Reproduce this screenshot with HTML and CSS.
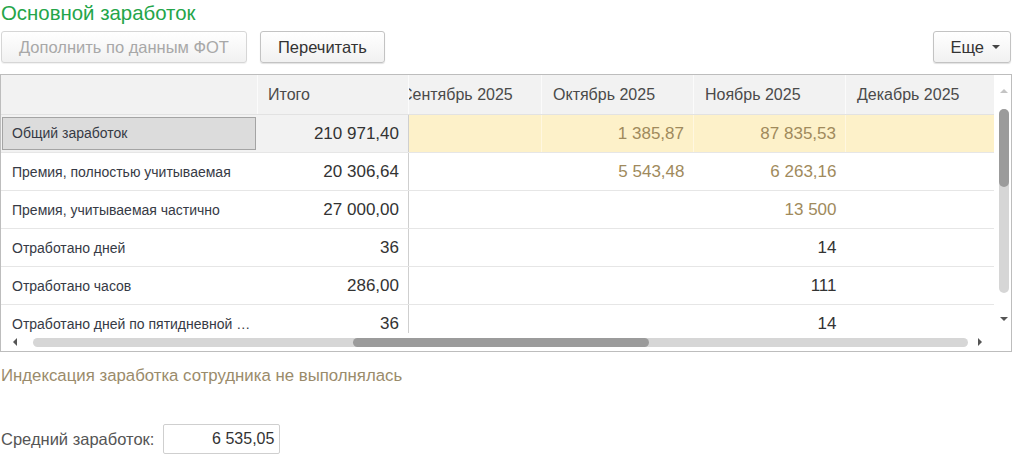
FILE: index.html
```html
<!DOCTYPE html>
<html lang="ru">
<head>
    <meta charset="UTF-8">
    <meta name="viewport" content="width=device-width, initial-scale=1.0">
    <title>Основной заработок</title>
    <link rel="stylesheet" href="styles.css">
</head>
<body>
  <div class="form">
    <div class="group_title">Основной заработок</div>

    <div class="toolbar">
      <button class="btn" disabled>Дополнить по данным ФОТ</button>
      <button class="btn">Перечитать</button>
      <button class="btn more">Еще <span class="caret"></span></button>
    </div>

    <div class="grid">
      <div class="grid_body">
        <table class="fixed">
          <tr class="head">
            <th class="name"></th>
            <th>Итого</th>
          </tr>
          <tr class="current">
            <td class="name"><div class="selected">Общий заработок</div></td>
            <td class="num">210 971,40</td>
          </tr>
          <tr>
            <td class="name">Премия, полностью учитываемая</td>
            <td class="num">20 306,64</td>
          </tr>
          <tr>
            <td class="name">Премия, учитываемая частично</td>
            <td class="num">27 000,00</td>
          </tr>
          <tr>
            <td class="name">Отработано дней</td>
            <td class="num">36</td>
          </tr>
          <tr>
            <td class="name">Отработано часов</td>
            <td class="num">286,00</td>
          </tr>
          <tr>
            <td class="name">Отработано дней по пятидневной …</td>
            <td class="num">36</td>
          </tr>
        </table>

        <div class="months_view">
          <table class="months">
            <tr class="head">
              <th>Сентябрь 2025</th>
              <th>Октябрь 2025</th>
              <th>Ноябрь 2025</th>
              <th>Декабрь 2025</th>
            </tr>
            <tr class="current">
              <td></td>
              <td class="num soft">1 385,87</td>
              <td class="num soft">87 835,53</td>
              <td></td>
            </tr>
            <tr>
              <td></td>
              <td class="num soft">5 543,48</td>
              <td class="num soft">6 263,16</td>
              <td></td>
            </tr>
            <tr>
              <td></td>
              <td></td>
              <td class="num soft">13 500</td>
              <td></td>
            </tr>
            <tr>
              <td></td>
              <td></td>
              <td class="num">14</td>
              <td></td>
            </tr>
            <tr>
              <td></td>
              <td></td>
              <td class="num">111</td>
              <td></td>
            </tr>
            <tr>
              <td></td>
              <td></td>
              <td class="num">14</td>
              <td></td>
            </tr>
          </table>
        </div>
      </div>

      <div class="vscroll">
        <span class="arrow up"></span>
        <div class="track"><div class="thumb"></div></div>
        <span class="arrow down"></span>
      </div>

      <div class="hscroll">
        <span class="arrow left"></span>
        <div class="track"><div class="thumb"></div></div>
        <span class="arrow right"></span>
      </div>

      <div class="corner"></div>
    </div>

    <div class="note">Индексация заработка сотрудника не выполнялась</div>

    <div class="average">
      <span class="label">Средний заработок:</span>
      <div class="field">6 535,05</div>
    </div>
  </div>
</body>
</html>
```

FILE: styles.css
```css
body{
  margin: 0;
  background: #fff;
  font-family: Arial, "Liberation Sans", sans-serif;
  color: #333;
}

.form{
  width: 1012px;
}

.group_title{
  height: 26px;
  line-height: 26px;
  padding-left: 1px;
  font-size: 20.4px;
  color: #24a549;
}

/* buttons */

.toolbar{
  display: flex;
  gap: 13px;
  margin-top: 5px;
  padding: 0 1px 0 1px;
}

.btn{
  height: 32px;
  padding: 0 17px;
  font-family: inherit;
  font-size: 16.5px;
  color: #333;
  background: linear-gradient(#ffffff, #f1f1f1);
  border: 1px solid #c3c3c3;
  border-radius: 3px;
  box-shadow: 0 1px 1px rgba(0,0,0,0.12);
}

.btn[disabled]{
  color: #a8a8a8;
  border-color: #d6d6d6;
  box-shadow: 0 1px 1px rgba(0,0,0,0.06);
}

.more{
  margin-left: auto;
  display: flex;
  align-items: center;
  gap: 8px;
  padding: 0 10px 0 16px;
}

.caret{
  width: 0;
  height: 0;
  border-left: 4px solid transparent;
  border-right: 4px solid transparent;
  border-top: 4px solid #444;
}

/* table */

.grid{
  display: grid;
  grid-template-columns: 993px 17px;
  grid-template-rows: 258px 18px;
  margin-top: 11px;
  border: 1px solid #bdbdbd;
}

.grid_body{
  display: flex;
  overflow: hidden;
}

table{
  border-collapse: collapse;
  table-layout: fixed;
}

th, td{
  height: 37px;
  padding: 0;
  border-bottom: 1px solid #e6e6e6;
  white-space: nowrap;
  overflow: hidden;
}

.head th{
  height: 39px;
  background: #f2f2f2;
  font-weight: normal;
  text-align: left;
  font-size: 16px;
  color: #4a4a4a;
  padding-left: 10px;
  border-right: 1px solid #fbfbfb;
  border-bottom: 1px solid #e2e2e2;
}

.fixed{
  width: 408px;
  flex: none;
  border-right: 1px solid #cfcfcf;
}

.fixed .name{
  width: 256px;
  padding-left: 11px;
  font-size: 14px;
  color: #363a45;
}

.fixed th.name{
  padding: 0;
}

.num{
  text-align: right;
  padding-right: 9px;
  font-size: 17px;
  color: #333;
}

.soft{
  color: #a08a5c;
}

.current td{
  background: #fdf1c9;
  border-right: 1px solid #fff7e0;
}

.fixed .current td{
  background: #f2f2f2;
  border-right: 0;
}

/* the selected cell keeps the row at 37px: 33 + padding */
.fixed .current .name{
  height: 33px;
  padding: 2px 2px 2px 1px;
}

.selected{
  height: 31px;
  line-height: 31px;
  padding-left: 9px;
  background: #dcdcdc;
  border: 1px solid #a4a4a4;
}

.months_view{
  flex: 1;
  overflow: hidden;
}

.months{
  width: 608px;
  margin-left: -19px;
}

.months th{
  width: 140px;
}

.months .head th{
  padding-left: 11px;
}

/* scrollbars */

.vscroll{
  display: flex;
  flex-direction: column;
  align-items: center;
  padding: 14px 0 12px 2px;
}

.vscroll .track{
  flex: 1;
  width: 10px;
  margin: 16px 0 24px;
  border-radius: 5px;
  background: #d6d6d6;
}

.vscroll .thumb{
  height: 78px;
  border-radius: 5px;
  background: #9b9b9b;
}

.hscroll{
  display: flex;
  align-items: center;
  padding: 0 12px 0 12px;
}

.hscroll .track{
  flex: 1;
  height: 9px;
  margin: 0 10px 0 16px;
  border-radius: 5px;
  background: #d6d6d6;
  padding-left: 320px;
}

.hscroll .thumb{
  width: 296px;
  height: 9px;
  border-radius: 5px;
  background: #9b9b9b;
}

.arrow{
  width: 0;
  height: 0;
}

.arrow.up{
  border-left: 4px solid transparent;
  border-right: 4px solid transparent;
  border-bottom: 4px solid #c4c4c4;
}

.arrow.down{
  border-left: 4px solid transparent;
  border-right: 4px solid transparent;
  border-top: 4px solid #555;
}

.arrow.left{
  border-top: 4px solid transparent;
  border-bottom: 4px solid transparent;
  border-right: 4px solid #555;
}

.arrow.right{
  border-top: 4px solid transparent;
  border-bottom: 4px solid transparent;
  border-left: 4px solid #555;
}

/* bottom fields */

.note{
  margin-top: 14px;
  line-height: 20px;
  padding-left: 1px;
  font-size: 16.8px;
  color: #9a8b6b;
}

.average{
  display: flex;
  align-items: center;
  gap: 9px;
  margin-top: 38px;
  padding-left: 1px;
}

.label{
  font-size: 16.5px;
  color: #555;
}

.field{
  width: 110px;
  height: 28px;
  line-height: 28px;
  padding-right: 5px;
  text-align: right;
  font-size: 16px;
  border: 1px solid #cfcfcf;
  border-radius: 2px;
}
```
